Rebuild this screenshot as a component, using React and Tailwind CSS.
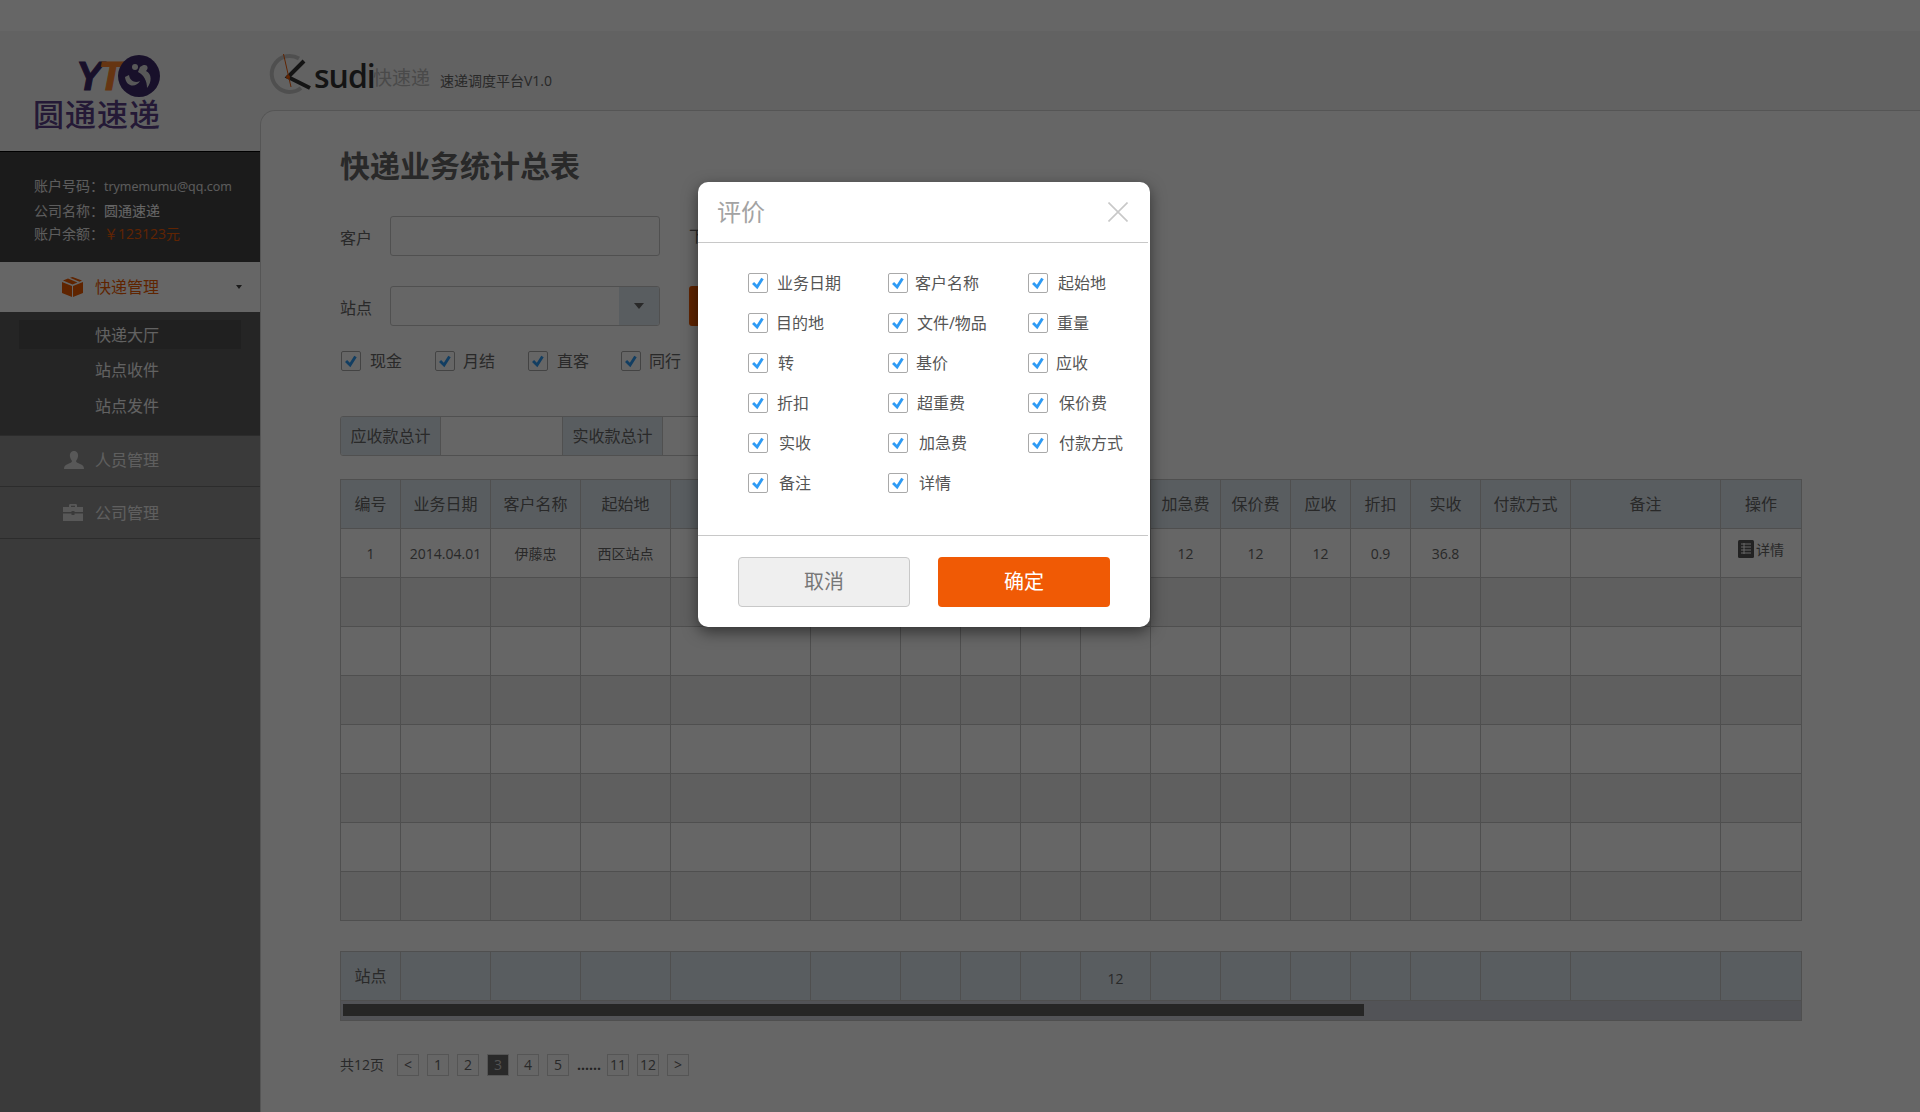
const FONT = "font-['Open_Sans','Noto_Sans_CJK_SC',sans-serif]";

const colWidths = [
  "w-[60px]", "w-[90px]", "w-[90px]", "w-[90px]", "w-[140px]", "w-[90px]", "w-[60px]", "w-[60px]", "w-[60px]",
  "w-[70px]", "w-[70px]", "w-[70px]", "w-[60px]", "w-[60px]", "w-[70px]", "w-[90px]", "w-[150px]", "w-[81px]",
];

const headers = [
  "编号", "业务日期", "客户名称", "起始地", "目的地", "文件/物品", "重量", "转", "基价",
  "超重费", "加急费", "保价费", "应收", "折扣", "实收", "付款方式", "备注", "操作",
];

const firstRow = ["1", "2014.04.01", "伊藤忠", "西区站点", "南京市", "文件", "1", "否", "12", "12", "12", "12", "12", "0.9", "36.8", "", ""];

const summary = ["站点", "", "", "", "", "", "", "", "", "12", "", "", "", "", "", "", "", ""];

const modalFields = [
  [["业务日期", "ml-[9px]"], ["客户名称", "ml-[7px]"], ["起始地", "ml-[10px]"]],
  [["目的地", "ml-[8px]"], ["文件/物品", "ml-[9px]"], ["重量", "ml-[9px]"]],
  [["转", "ml-[10px]"], ["基价", "ml-[8px]"], ["应收", "ml-[8px]"]],
  [["折扣", "ml-[9px]"], ["超重费", "ml-[9px]"], ["保价费", "ml-[11px]"]],
  [["实收", "ml-[11px]"], ["加急费", "ml-[11px]"], ["付款方式", "ml-[11px]"]],
  [["备注", "ml-[11px]"], ["详情", "ml-[11px]"]],
];

const pages = ["<", "1", "2", "3", "4", "5", "......", "11", "12", ">"];

function Check() {
  return (
    <span className="flex h-5 w-5 shrink-0 items-center justify-center rounded-[2px] border border-[#a9a9a9] bg-white">
      <svg viewBox="0 0 20 20" className="h-5 w-5">
        <path d="M4.5 10 L9 14.5 L15 5" fill="none" stroke="#2e9bf5" strokeWidth="3.2" />
      </svg>
    </span>
  );
}

function Logo() {
  return (
    <div className="h-[120px] pl-[33px] pt-[23px]">
      <div className="flex h-[43px] w-[127px] items-center justify-end">
        <span className="font-['Liberation_Sans',sans-serif] text-[40px] font-bold italic leading-[40px] tracking-[-4px] text-[#3d2a6a] [-webkit-text-stroke:1px_#3d2a6a]">
          Y<span className="text-[#ff842d] [-webkit-text-stroke:1px_#ff842d]">T</span>
        </span>
        <svg viewBox="0 0 42 42" className="ml-[-1px] h-[42px] w-[42px]">
          <circle cx="21" cy="21" r="21" fill="#3d2a6a" />
          <path d="M7 22 C8 32 18 33 22 26 C18 28 12 27 11 20 Z" fill="#ddd" />
          <path d="M22 12 C28 7 32 12 28 16 C34 19 34 27 29 33 C29 26 26 20 20 17 Z" fill="#ddd" />
          <circle cx="17" cy="12" r="3" fill="#ddd" />
        </svg>
      </div>
      <div className="whitespace-nowrap font-['Noto_Sans_CJK_SC',sans-serif] text-[31px] font-medium leading-[32px] tracking-[1px] text-[#5a3f88]">
        圆通速递
      </div>
    </div>
  );
}

function Sidebar() {
  return (
    <aside className="flex w-[260px] shrink-0 flex-col bg-[#919191]">
      <div className="bg-[#f5f5f5]">
        <Logo />
      </div>
      <div className="h-[111px] border-t border-black bg-[#444444] pl-[34px] pt-[22px] text-[14px] leading-[23.5px] text-[#e8e8e8]">
        <div>账户号码：<span className="text-[12.5px]">trymemumu@qq.com</span></div>
        <div>公司名称：<span className="text-white">圆通速递</span></div>
        <div>
          账户余额：<span className="text-[#f05a05]">￥123123元</span>
        </div>
      </div>
      <div className="flex h-[50px] items-center bg-white pl-[62px] pr-[18px] text-[16px] text-[#ee5a00]">
        <svg viewBox="0 0 21 20" className="h-5 w-[21px]">
          <path d="M0 5 L10 9 V20 L0 16 Z M11 9 L21 5 V16 L11 20 Z" fill="#ee5a00" />
          <path d="M1 3.5 L6 1.5 L15.5 5.5 L10.5 7.5 Z M8 .8 L10.5 0 L20 3.5 L17.5 4.7 Z" fill="#ee5a00" />
        </svg>
        <span className="ml-3">快递管理</span>
        <span className="ml-auto h-0 w-0 border-x-[3.5px] border-t-[4px] border-x-transparent border-t-[#444]" />
      </div>
      <div className="h-[123px] bg-[#5c5c5c] pt-2 text-[16px] text-[#f4f4f4]">
        <div className="mx-[19px] flex h-[29px] items-center bg-[#515151] pl-[76px]">快递大厅</div>
        <div className="flex h-[36px] items-center pl-[95px] pt-[6px]">站点收件</div>
        <div className="flex h-[36px] items-center pl-[95px] pt-[6px]">站点发件</div>
      </div>
      <div className="flex h-[52px] items-center border-y border-[#6e6e6e] pb-[2px] pl-[64px] text-[16px] text-[#eee]">
        <svg viewBox="0 0 20 18" className="h-[18px] w-5">
          <path d="M10 0 C13 0 14.5 2.5 14 5.5 C13.7 7.5 12.5 9 12 10 C12 11.5 14 12 16 13 C18.5 14 20 15 20 18 H0 C0 15 1.5 14 4 13 C6 12 8 11.5 8 10 C7.5 9 6.3 7.5 6 5.5 C5.5 2.5 7 0 10 0 Z" fill="#dcdcdc" />
        </svg>
        <span className="ml-[11px]">人员管理</span>
      </div>
      <div className="flex h-[52px] items-center border-b border-[#6e6e6e] pl-[63px] text-[16px] text-[#eee]">
        <svg viewBox="0 0 20 17" className="h-[17px] w-5">
          <path d="M6 3 V1.5 C6 .5 6.5 0 7.5 0 H12.5 C13.5 0 14 .5 14 1.5 V3 H20 V8 H11.5 V7 H8.5 V8 H0 V3 Z M8 3 H12 V1.8 H8 Z" fill="#dcdcdc" />
          <path d="M0 9.5 H8.5 V11 H11.5 V9.5 H20 V17 H0 Z" fill="#dcdcdc" />
        </svg>
        <span className="ml-3">公司管理</span>
      </div>
    </aside>
  );
}

function Header() {
  return (
    <div className="flex h-[79px] items-start bg-[#f5f5f5] pl-[9px] pt-[22px]">
      <svg viewBox="0 0 44 44" className="h-[44px] w-[44px] shrink-0">
        <path d="M30 5.5 A18 18 0 1 0 32 35" fill="none" stroke="#c6c6c6" strokeWidth="4" />
        <path d="M35 8 L19 24 L41 35" fill="none" stroke="#333" strokeWidth="4" />
        <path d="M14.5 1 L22 34" fill="none" stroke="#f05a05" strokeWidth="1" />
        <circle cx="19" cy="24" r="2" fill="#f05a05" />
      </svg>
      <span className="ml-[1px] mt-[1px] w-[59px] whitespace-nowrap font-['Open_Sans',sans-serif] text-[32px] font-semibold leading-[44px] tracking-[-1px] text-[#333]">sudi</span>
      <span className="mt-[12px] text-[19px] leading-[26px] text-[#b8b8b8]">快速递</span>
      <span className="ml-[10px] mt-[18px] text-[14px] leading-[20px] text-[#666]">速递调度平台V1.0</span>
    </div>
  );
}

function Filters() {
  return (
    <>
      <div className="mt-[30px] flex h-10 items-center text-[16px] text-[#666]">
        <span className="w-[50px] pt-1">客户</span>
        <div className="h-10 w-[270px] rounded-[3px] border border-[#c8c8c8] bg-white" />
        <span className="ml-[29px]">下单时间</span>
      </div>
      <div className="mt-[30px] flex h-10 items-center text-[16px] text-[#666]">
        <span className="w-[50px] pt-1">站点</span>
        <div className="flex h-10 w-[270px] justify-end overflow-hidden rounded-[3px] border border-[#c8c8c8] bg-white">
          <span className="flex w-[40px] items-center justify-center bg-[#dfe9f0]">
            <span className="h-0 w-0 border-x-[5px] border-t-[6px] border-x-transparent border-t-[#666]" />
          </span>
        </div>
        <button type="button" className="ml-[29px] h-10 w-[110px] rounded-[3px] bg-[#ee5a00] text-white">查询</button>
      </div>
      <div className="mt-[25px] ml-px flex h-5 items-center text-[16px] text-[#666]">
        <Check /><span className="ml-[9px] w-[65px]">现金</span>
        <Check /><span className="ml-2 w-[65px]">月结</span>
        <Check /><span className="ml-[9px] w-[64px]">直客</span>
        <Check /><span className="ml-2">同行</span>
      </div>
      <div className="mt-[45px] flex h-10 w-[560px] overflow-hidden rounded-[3px] border border-[#c8c8c8] text-[16px] text-[#666]">
        <span className="flex w-[100px] items-center justify-center border-r border-[#c8c8c8] bg-[#dfe9f0]">应收款总计</span>
        <span className="w-[121px]" />
        <span className="flex w-[101px] items-center justify-center border-x border-[#c8c8c8] bg-[#dfe9f0]">实收款总计</span>
        <span className="w-[121px]" />
      </div>
    </>
  );
}

function DataTable() {
  return (
    <table className="mt-[23px] w-[1461px] table-fixed border-collapse text-center text-[14px] text-[#666]">
      <colgroup>
        {colWidths.map((w, i) => (
          <col key={i} className={w} />
        ))}
      </colgroup>
      <thead>
        <tr className="h-[49px] bg-[#dfe9f0] text-[16px]">
          {headers.map((h) => (
            <th key={h} className="border border-[#c6c6c6] font-normal">{h}</th>
          ))}
        </tr>
      </thead>
      <tbody>
        <tr className="h-[49px]">
          {firstRow.map((c, i) => (
            <td key={i} className="border border-[#c6c6c6]">{c}</td>
          ))}
          <td className="border border-[#c6c6c6] pb-1">
            <span className="inline-flex items-center gap-[2px]">
              <svg viewBox="0 0 16 18" className="h-[18px] w-4">
                <rect width="16" height="18" rx="1.5" fill="#555" />
                <path d="M3 4 H13 M3 7 H13 M3 10 H13 M3 13 H13" stroke="#fff" strokeWidth="1.2" />
                <path d="M6 3 V14" stroke="#fff" strokeWidth="1" />
              </svg>
              详情
            </span>
          </td>
        </tr>
        {[0, 1, 2, 3, 4, 5, 6].map((r) => (
          <tr key={r} className={r % 2 === 0 ? "h-[49px] bg-[#eeeeee]" : "h-[49px] bg-white"}>
            {headers.map((h) => (
              <td key={h} className="border border-[#c6c6c6]" />
            ))}
          </tr>
        ))}
      </tbody>
    </table>
  );
}

function SummaryTable() {
  return (
    <div className="mt-[30px] w-[1462px] border border-[#c6c6c6] bg-[#cdd0d9]">
      <table className="-ml-px w-[1461px] table-fixed border-collapse text-center text-[#666]">
        <colgroup>
          {colWidths.map((w, i) => (
            <col key={i} className={w} />
          ))}
        </colgroup>
        <tbody>
          <tr className="h-[48px] bg-[#dfe9f0]">
            {summary.map((c, i) => (
              <td key={i} className={i === 0 ? "border-x border-b border-[#c6c6c6] text-[16px]" : "border-x border-b border-[#c6c6c6] pt-[6px] text-[14px]"}>{c}</td>
            ))}
          </tr>
        </tbody>
      </table>
      <div className="px-[2px] pb-1 pt-[3px]">
        <div className="h-3 w-[1021px] bg-[#5f5f5f]" />
      </div>
    </div>
  );
}

function Pagination() {
  return (
    <div className="mt-[33px] flex h-[22px] items-center text-[14px] text-[#666]">
      <span className="w-[57px]">共12页</span>
      <div className="flex gap-2">
        {pages.map((p) =>
          p === "......" ? (
            <span key={p} className="w-[22px] text-center font-bold text-[#555]">{p}</span>
          ) : (
            <span
              key={p}
              className={
                p === "3"
                  ? "flex h-[22px] w-[22px] items-center justify-center border border-[#d4d4d4] bg-[#666] text-[#ccc]"
                  : "flex h-[22px] w-[22px] items-center justify-center border border-[#d4d4d4]"
              }
            >
              {p}
            </span>
          )
        )}
      </div>
    </div>
  );
}

function ColumnModal() {
  return (
    <div className="absolute inset-0 bg-black/60">
      <div className="absolute left-[698px] top-[182px] h-[445px] w-[452px] rounded-[10px] bg-white shadow-[0_5px_15px_rgba(0,0,0,0.5)]">
        <div className="flex h-[61px] w-[450px] items-center justify-between border-b border-[#c8c8c8] pl-[19px] pr-[20px]">
          <h2 className="text-[24px] font-normal text-[#a3a3a3]">评价</h2>
          <button type="button">
            <svg viewBox="0 0 20 20" className="h-5 w-5">
              <path d="M0.5 0.5 L19.5 19.5 M19.5 0.5 L0.5 19.5" stroke="#c8c8c8" strokeWidth="1.6" />
            </svg>
          </button>
        </div>
        <div className="grid h-[293px] w-[450px] grid-cols-[140px_140px_140px] content-start gap-y-5 border-b border-[#c8c8c8] pl-[50px] pt-[30px]">
          {modalFields.flat().map(([label, gap]) => (
            <label key={label} className="flex h-5 items-center text-[16px] text-[#555]">
              <Check />
              <span className={gap}>{label}</span>
            </label>
          ))}
        </div>
        <div className="flex gap-[28px] pl-10 pt-[21px]">
          <button type="button" className="h-[50px] w-[172px] rounded-[4px] border border-[#c8c8c8] bg-[#efefef] text-[20px] text-[#777]">取消</button>
          <button type="button" className="h-[50px] w-[172px] rounded-[4px] bg-[#f05a05] text-[20px] text-white">确定</button>
        </div>
      </div>
    </div>
  );
}

export default function App() {
  return (
    <div className={`relative flex h-screen flex-col overflow-hidden bg-white ${FONT}`}>
      <div className="h-[31px] shrink-0 bg-white" />
      <div className="flex flex-1">
        <Sidebar />
        <main className="flex flex-1 flex-col bg-[#f5f5f5]">
          <Header />
          <div className="flex-1 rounded-tl-[15px] border-l border-t border-[#d4d4d4] bg-white pl-[79px] pt-[35px]">
            <h1 className="h-10 text-[30px] font-bold leading-10 text-[#666]">快递业务统计总表</h1>
            <Filters />
            <DataTable />
            <SummaryTable />
            <Pagination />
          </div>
        </main>
      </div>
      <ColumnModal />
    </div>
  );
}
